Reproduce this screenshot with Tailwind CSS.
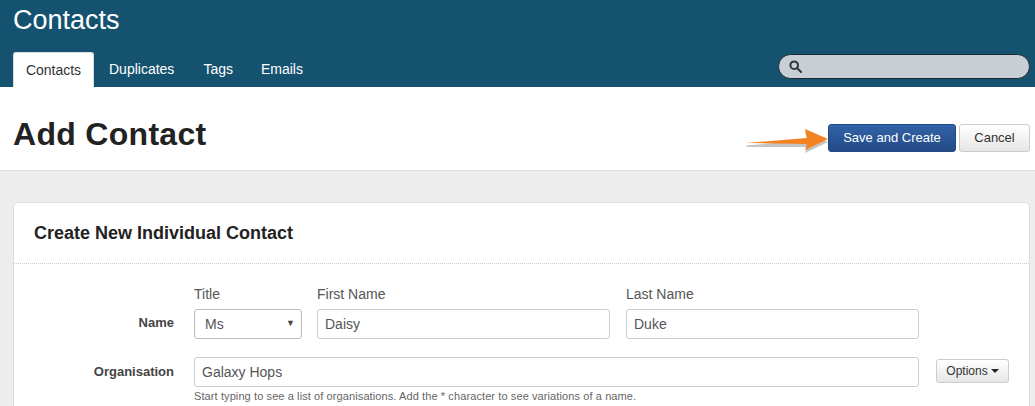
<!DOCTYPE html>
<html lang="en">
<head>
  <meta charset="UTF-8" />
  <title>Add Contact</title>
  <script src="https://cdn.jsdelivr.net/npm/@tailwindcss/browser@4"></script>
</head>
<body class="h-[406px] overflow-hidden bg-[#ededed] font-['Liberation_Sans',Arial,sans-serif] text-[14px] text-[#333]">
  <!-- top bar -->
  <header class="h-[87px] bg-[#14526f] flex flex-col justify-between">
    <h2 class="pl-[13px] text-[27px] leading-[40px] text-white">Contacts</h2>
    <div class="flex items-end justify-between pl-[13px] pr-[5px]">
      <nav class="flex h-[35px] text-white">
        <a class="w-[81px] flex items-center justify-center bg-white text-[#333] rounded-t-[3px] border border-b-0 border-[#ddd]">Contacts</a>
        <a class="ml-[15px] flex items-center">Duplicates</a>
        <a class="ml-[29px] flex items-center">Tags</a>
        <a class="ml-[28px] flex items-center">Emails</a>
      </nav>
      <div class="mb-[8px] w-[252px] h-[25px] rounded-full bg-[#c7ced4] border border-[#1d2a33] flex items-center pl-[10px]">
        <svg width="13" height="13" viewBox="0 0 13 13" fill="none" stroke="#333" stroke-width="2"><circle cx="5.2" cy="5.2" r="3.8"/><path d="M8 8l4 4" stroke-linecap="round"/></svg>
      </div>
    </div>
  </header>

  <!-- page title -->
  <section class="h-[84px] bg-white border-b border-[#ddd] flex items-center justify-between pl-[13px] pr-[5px] pt-[25px] relative">
    <h1 class="text-[32px] leading-[40px] font-bold text-[#222] tracking-[0.3px] -mt-[14px]">Add Contact</h1>
    <div class="flex gap-[3px] -mt-[7px]">
      <button class="w-[128px] h-[28px] rounded-[3px] bg-gradient-to-b from-[#3263a8] to-[#234a85] border border-[#234a85] text-white text-[13px]">Save and Create</button>
      <button class="w-[71px] h-[28px] rounded-[3px] bg-gradient-to-b from-white to-[#e6e6e6] border border-[#ccc] text-[#333] text-[13px]">Cancel</button>
    </div>
    <svg class="absolute left-[745px] top-[41px]" width="84" height="28" viewBox="0 0 84 28">
      <path d="M1 15.5 L62 10 L60 2 L83 12 L60 23 L62 17 L2 17 Z" fill="#555" opacity="0.35" transform="translate(0 2)"/>
      <path d="M1 15 L62 10 L60 1 L83 11 L60 22 L62 16 Z" fill="#f58220"/>
    </svg>
  </section>

  <!-- form card -->
  <main class="pt-[31px] pl-[13px] pr-[5px]">
    <div class="bg-white border border-[#ddd] rounded-[5px] h-[240px]">
      <h3 class="h-[61px] pl-[20px] flex items-center text-[18px] font-bold text-[#222] border-b border-dotted border-[#ccc]">Create New Individual Contact</h3>
      <div class="pt-[20px]">
        <div class="flex items-end">
          <label class="w-[160px] text-right font-bold text-[13px] text-[#444] pb-[7px]">Name</label>
          <div class="ml-[20px] w-[108px]">
            <div class="text-[#555] leading-[20px] mb-[5px]">Title</div>
            <div class="h-[30px] border border-[#bbb] rounded-[3px] flex items-center justify-between pl-[10px] pr-[6px] text-[#555]">Ms <span class="text-[9px] text-[#444]">▼</span></div>
          </div>
          <div class="ml-[15px] w-[293px]">
            <div class="text-[#555] leading-[20px] mb-[5px]">First Name</div>
            <div class="h-[30px] border border-[#ccc] rounded-[3px] flex items-center pl-[7px] text-[#555]">Daisy</div>
          </div>
          <div class="ml-[16px] w-[293px]">
            <div class="text-[#555] leading-[20px] mb-[5px]">Last Name</div>
            <div class="h-[30px] border border-[#ccc] rounded-[3px] flex items-center pl-[7px] text-[#555]">Duke</div>
          </div>
        </div>
        <div class="flex items-start mt-[18px]">
          <label class="w-[160px] text-right font-bold text-[13px] text-[#444] pt-[5px]">Organisation</label>
          <div class="ml-[20px] w-[725px]">
            <div class="h-[30px] border border-[#ccc] rounded-[3px] flex items-center pl-[7px] text-[#555]">Galaxy Hops</div>
            <p class="mt-[2px] text-[11px] leading-[14px] text-[#666] tracking-[0.1px]">Start typing to see a list of organisations. Add the * character to see variations of a name.</p>
          </div>
          <button class="ml-[17px] mt-[2px] w-[73px] h-[24px] rounded-[3px] bg-gradient-to-b from-white to-[#e6e6e6] border border-[#ccc] text-[#333] text-[12px] flex items-center justify-center gap-[3px]">Options <span class="w-0 h-0 border-x-[4px] border-x-transparent border-t-[4px] border-t-[#222]"></span></button>
        </div>
      </div>
    </div>
  </main>
</body>
</html>
